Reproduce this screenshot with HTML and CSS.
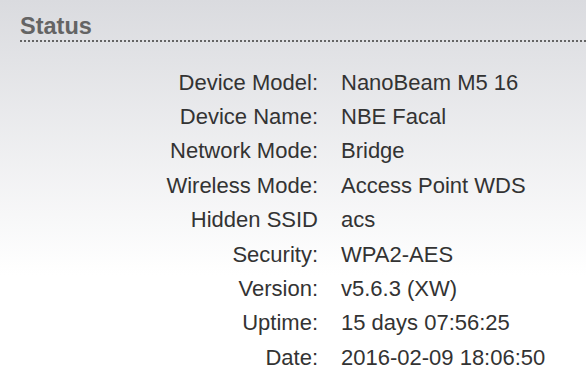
FILE: index.html
```html
<!DOCTYPE html>
<html>
<head>
<meta charset="utf-8">
<link rel="stylesheet" href="styles.css">
</head>
<body>
<div class="panel">
  <h1 class="title">Status</h1>
  <dl class="info">
    <dt>Device Model:</dt><dd>NanoBeam M5 16</dd>
    <dt>Device Name:</dt><dd>NBE Facal</dd>
    <dt>Network Mode:</dt><dd>Bridge</dd>
    <dt>Wireless Mode:</dt><dd>Access Point WDS</dd>
    <dt>Hidden SSID</dt><dd>acs</dd>
    <dt>Security:</dt><dd>WPA2-AES</dd>
    <dt>Version:</dt><dd>v5.6.3 (XW)</dd>
    <dt>Uptime:</dt><dd>15 days 07:56:25</dd>
    <dt>Date:</dt><dd>2016-02-09 18:06:50</dd>
  </dl>
</div>
</body>
</html>
```

FILE: styles.css
```css
html, body {
  margin: 0;
  padding: 0;
  height: 100%;
}
body {
  background: linear-gradient(to bottom, #dadbdf 0px, #ffffff 275px, #ffffff 100%);
  font-family: "Liberation Sans", Arial, Helvetica, sans-serif;
  overflow: hidden;
}
.panel {
  padding: 14px 0 0 20px;
}
.title {
  margin: 0;
  font-size: 23.5px;
  line-height: 24px;
  font-weight: bold;
  color: #646464;
  padding-bottom: 2px;
  border-bottom: 2px dotted #646464;
}
.info {
  margin: 23.6px 0 0 0;
  display: grid;
  grid-template-columns: 298px auto;
  column-gap: 23px;
  font-size: 22px;
  line-height: 34.4px;
  color: #333333;
}
.info dt {
  text-align: right;
}
.info dd {
  margin: 0;
}
```
